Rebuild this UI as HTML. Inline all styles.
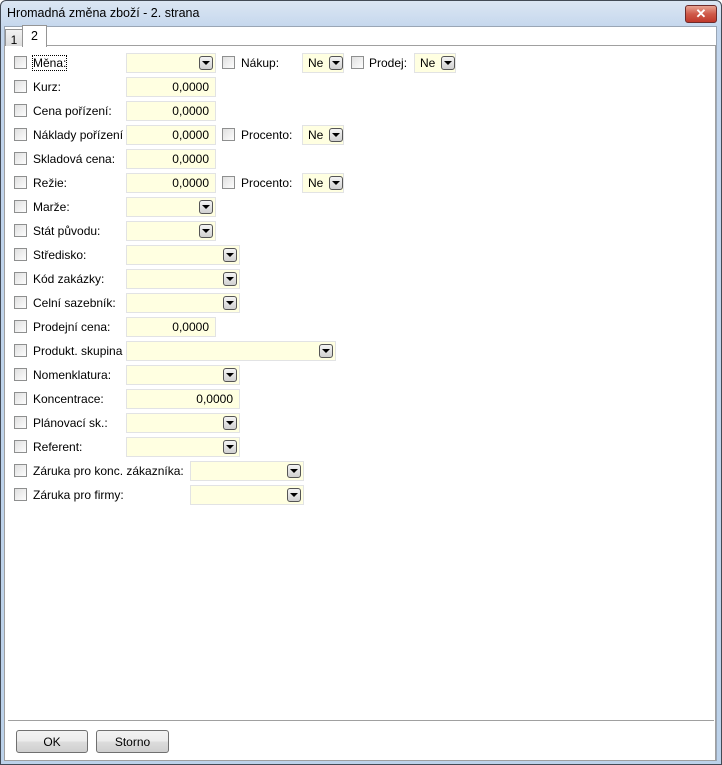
<!DOCTYPE html>
<html><head><meta charset="utf-8"><style>
*{box-sizing:border-box}
body{margin:0;width:722px;height:765px;position:relative;overflow:hidden;font-family:"Liberation Sans",sans-serif;font-size:12px;color:#000;background:#fff}
.a{position:absolute}
.frame{left:0;top:0;width:722px;height:765px;border:1px solid #434a55;border-radius:6px 6px 0 0;background:linear-gradient(#dbe6f3,#c2d5ec 30px,#bcd2ea)}
.title{left:7px;top:6px;font-size:12.5px}
.close{left:685px;top:5px;width:32px;height:18px;border:1px solid #6d2b2b;border-radius:3px;background:linear-gradient(#e8a493,#cf5a4a 50%,#c0392b);color:#fff;text-align:center;font-weight:bold;font-size:13px;line-height:16px}
.client{left:4px;top:26px;width:713px;height:735px;background:#fff;border:1px solid #9aa6b5}
.panel{left:4px;top:45px;width:712px;height:716px;border:1px solid #a0a0a0;background:#fff}
.tab1{left:5px;top:29px;width:18px;height:17px;border:1px solid #959595;border-bottom:none;background:linear-gradient(#f2f2f2,#dcdcdc);text-align:center;line-height:20px}
.tab2{left:22px;top:25px;width:25px;height:22px;border:1px solid #959595;border-bottom:none;background:#fff;text-align:center;line-height:20px;font-size:12.5px}
.cb{width:13px;height:13px;border:1px solid #8e8f8f;background:linear-gradient(135deg,#e0e0e0,#fdfdfd)}
.lb{font-size:12px}
.f{height:20px;border:1px solid #e2e3e4;background:#ffffe1;text-align:right;padding-right:6px;line-height:19px}
.dd{width:14px;height:14px;border:1px solid #555;border-radius:3px;background:linear-gradient(#f4f4f4,#d0d0d0)}
.dd:after{content:"";position:absolute;left:2px;top:4px;border-left:4px solid transparent;border-right:4px solid transparent;border-top:4px solid #000}
.ne{text-align:left;padding-left:5px}
.sep{left:8px;top:720px;width:706px;height:1px;background:#a0a0a0}
.btn{top:730px;height:23px;border:1px solid #707070;border-radius:3px;background:linear-gradient(#f2f2f2,#ebebeb 50%,#dddddd 51%,#cfcfcf);text-align:center;line-height:22px}
</style></head><body>
<div class="a frame"></div>
<div class="a title">Hromadná změna zboží - 2. strana</div>
<div class="a close">✕</div>
<div class="a client"></div>
<div class="a panel"></div>
<div class="a tab1">1</div>
<div class="a tab2">2</div>
<div class="a sep"></div>
<div class="a btn" style="left:16px;width:72px">OK</div>
<div class="a btn" style="left:96px;width:73px">Storno</div>
<div id="rows"></div>
<script>
var rows=[
["Měna:",126,215,"","dd",1],
["Kurz:",126,215,"0,0000"],
["Cena pořízení:",126,215,"0,0000"],
["Náklady pořízení",126,215,"0,0000"],
["Skladová cena:",126,215,"0,0000"],
["Režie:",126,215,"0,0000"],
["Marže:",126,215,"","dd"],
["Stát původu:",126,215,"","dd"],
["Středisko:",126,239,"","dd"],
["Kód zakázky:",126,239,"","dd"],
["Celní sazebník:",126,239,"","dd"],
["Prodejní cena:",126,215,"0,0000"],
["Produkt. skupina",126,335,"","dd"],
["Nomenklatura:",126,239,"","dd"],
["Koncentrace:",126,239,"0,0000"],
["Plánovací sk.:",126,239,"","dd"],
["Referent:",126,239,"","dd"],
["Záruka pro konc. zákazníka:",190,303,"","dd"],
["Záruka pro firmy:",190,303,"","dd"]];
var h="";
function ne(x,y,w){return '<div class="a f ne" style="left:'+x+'px;top:'+y+'px;width:'+w+'px">Ne</div><div class="a dd" style="left:'+(x+w-15)+'px;top:'+(y+3)+'px"></div>';}
rows.forEach(function(r,i){
 var c=63+i*24,t=c-10;
 h+='<div class="a cb" style="left:14px;top:'+(c-7)+'px"></div>';
 h+='<div class="a lb" style="left:33px;top:'+(c-7)+'px'+(r[5]?';outline:1px dotted #000':'')+'">'+r[0]+'</div>';
 h+='<div class="a f" style="left:'+r[1]+'px;top:'+t+'px;width:'+(r[2]-r[1]+1)+'px">'+r[3]+'</div>';
 if(r[4])h+='<div class="a dd" style="left:'+(r[2]-16)+'px;top:'+(t+3)+'px"></div>';
});
h+='<div class="a cb" style="left:222px;top:56px"></div><div class="a lb" style="left:241px;top:56px">Nákup:</div>'+ne(302,53,42);
h+='<div class="a cb" style="left:351px;top:56px"></div><div class="a lb" style="left:369px;top:56px">Prodej:</div>'+ne(414,53,42);
[135,183].forEach(function(c){h+='<div class="a cb" style="left:222px;top:'+(c-7)+'px"></div><div class="a lb" style="left:241px;top:'+(c-7)+'px">Procento:</div>'+ne(302,c-10,42);});
document.getElementById("rows").innerHTML=h;
</script>
</body></html>
